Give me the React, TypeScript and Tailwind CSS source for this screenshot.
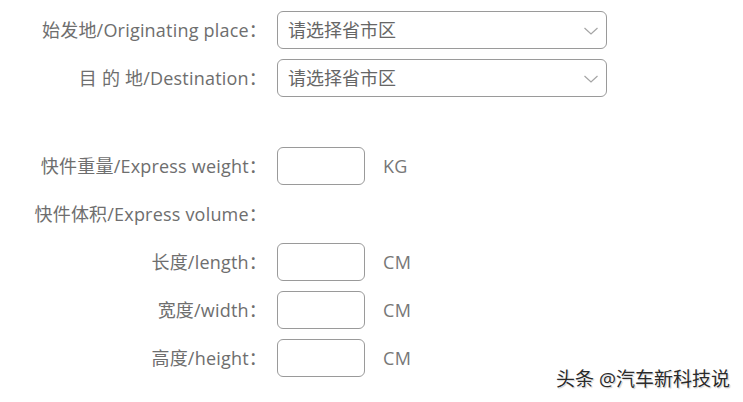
import React from "react";

const font = { fontFamily: '"Open Sans", "Noto Sans CJK SC", sans-serif' };

function Label({ children }: { children: React.ReactNode }) {
  return (
    <div className="w-[267px] shrink-0 text-right text-[18px] tracking-[0.2px] text-[#6e6e6e] leading-none whitespace-nowrap">
      {children}
    </div>
  );
}

function SelectRow({ label }: { label: string }) {
  return (
    <div className="flex items-center h-[38px]">
      <Label>{label}</Label>
      <div className="ml-[10px] w-[330px] h-[38px] rounded-[6px] border border-[#9a9a9a] flex items-center justify-between pl-[10px] pr-[7px]">
        <span className="text-[18px] text-[#666666] leading-none">请选择省市区</span>
        <svg width="16" height="10" viewBox="0 0 16 10" className="mt-[1px]">
          <path d="M1.5 2 L8 8 L14.5 2" fill="none" stroke="#a5a5a5" strokeWidth="1.2" />
        </svg>
      </div>
    </div>
  );
}

function BoxRow({ label, unit }: { label: string; unit?: string }) {
  return (
    <div className="flex items-center h-[38px]">
      <Label>{label}</Label>
      <div className="ml-[10px] w-[88px] h-[38px] rounded-[6px] border border-[#9a9a9a] shrink-0" />
      <span className="ml-[18px] text-[18px] tracking-[0.3px] text-[#777777] leading-none">{unit}</span>
    </div>
  );
}

export default function App() {
  return (
    <div className="relative w-[743px] h-[402px] bg-white overflow-hidden" style={font}>
      <div className="flex flex-col gap-[10px] pt-[11px]">
        <SelectRow label="始发地/Originating place：" />
        <SelectRow label="目 的 地/Destination：" />
        <div className="h-[30px]" />
        <BoxRow label="快件重量/Express weight：" unit="KG" />
        <div className="flex items-center h-[38px]">
          <Label>快件体积/Express volume：</Label>
        </div>
        <BoxRow label="长度/length：" unit="CM" />
        <BoxRow label="宽度/width：" unit="CM" />
        <BoxRow label="高度/height：" unit="CM" />
      </div>
      <div
        className="absolute left-[556px] top-[370px] text-[19px] text-[#2a2a2a] leading-none whitespace-nowrap"
        style={{ textShadow: "0 0 2px #fff, 0 0 2px #fff, 1px 1px 1px #bbb" }}
      >
        头条 @汽车新科技说
      </div>
    </div>
  );
}
